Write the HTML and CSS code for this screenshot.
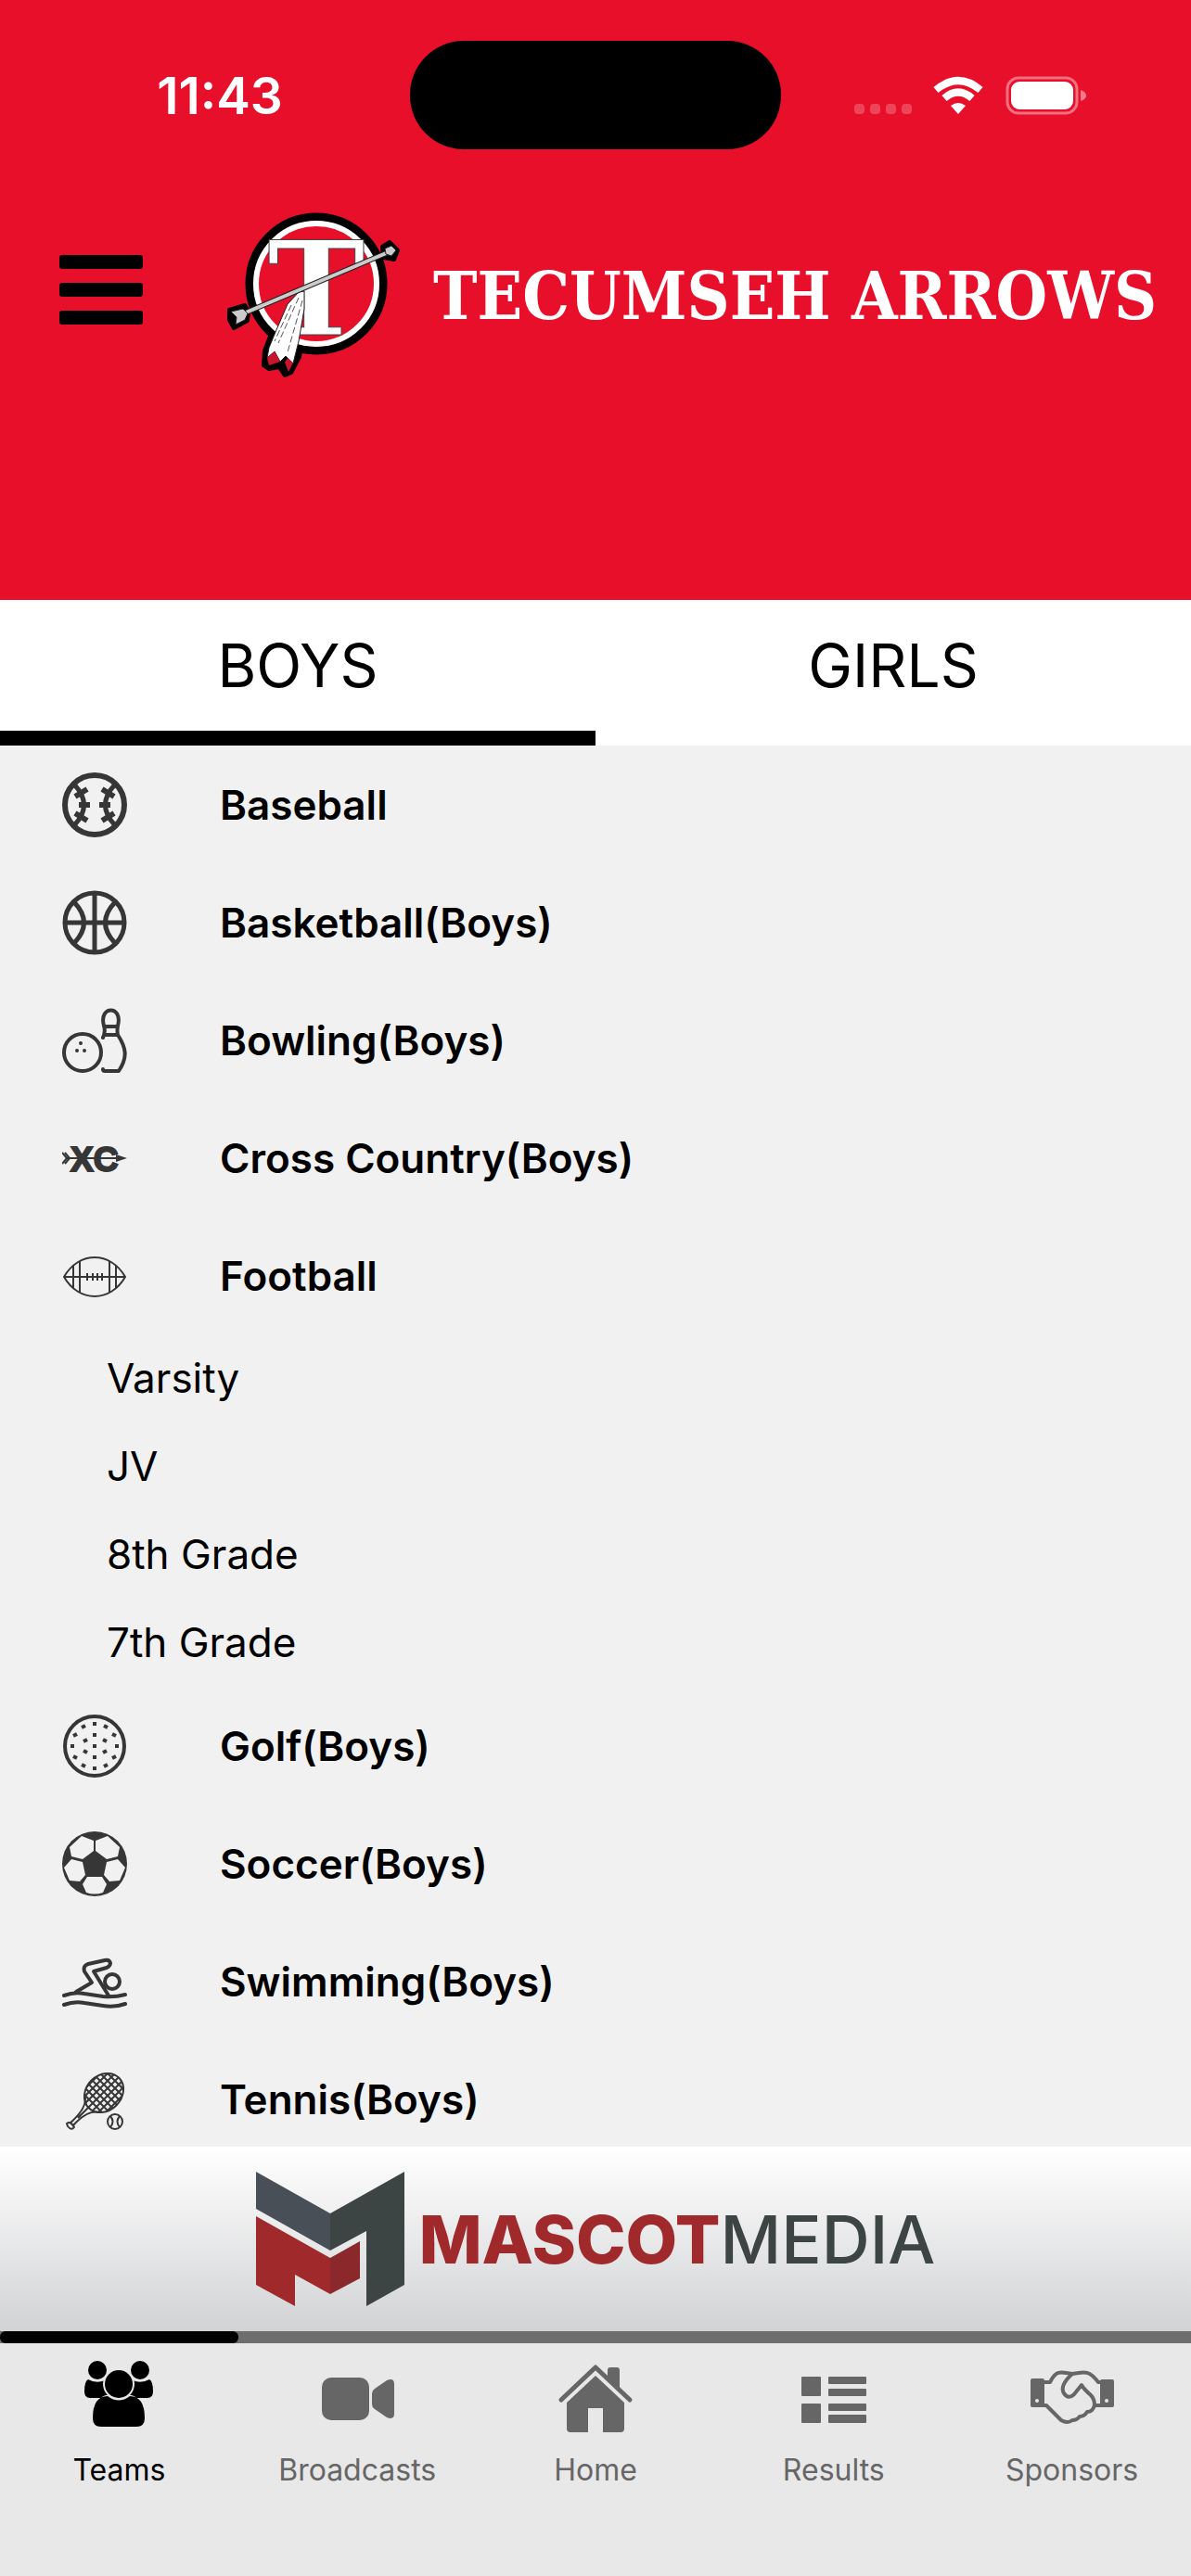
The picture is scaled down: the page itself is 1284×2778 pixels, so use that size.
FILE: index.html
```html
<!DOCTYPE html>
<html lang="en">
<head>
    <meta charset="UTF-8">
    <meta name="viewport" content="width=device-width">
    <title>Tecumseh Arrows</title>
    <link rel="stylesheet" href="styles.css">
</head>
<body>
<div class="app">
    <header class="header">
        <div class="status">
            <div class="status-side">11:43</div>
            <div class="island"></div>
            <div class="status-side">
                <svg width="250" height="42" viewBox="0 0 250 42" fill="#fff">
                    <g opacity=".22">
                        <rect x="0" y="30" width="11" height="11" rx="4"/>
                        <rect x="17" y="30" width="11" height="11" rx="4"/>
                        <rect x="34" y="30" width="11" height="11" rx="4"/>
                        <rect x="51" y="30" width="11" height="11" rx="4"/>
                    </g>
                    <g fill="none" stroke="#fff" stroke-width="8">
                        <path d="M88 15 Q112 -5 136 15"/>
                        <path d="M97 24 Q112 11 127 24"/>
                    </g>
                    <path d="M104 32 Q112 26 120 32 L112 41 Z"/>
                    <rect x="165" y="2" width="75" height="38" rx="12" fill="none" stroke="#fff" stroke-width="3" opacity=".4"/>
                    <rect x="169" y="6" width="67" height="30" rx="9"/>
                    <path d="M244 15 Q250 17 250 21 Q250 25 244 27 Z" opacity=".45"/>
                </svg>
            </div>
        </div>
        <div class="brand">
            <button class="menu" aria-label="Menu">
                <svg width="90" height="85" viewBox="0 0 90 85">
                    <rect width="90" height="15" rx="3"/>
                    <rect y="30" width="90" height="15" rx="3"/>
                    <rect y="60" width="90" height="15" rx="3"/>
                </svg>
            </button>
            <svg class="brand-logo" width="184" height="180" viewBox="15 19 184 180">
                <path d="M17 126 L34 121 38 128 37 138 22 146 17 137 Z M182 58 L190 53 199 62 195 72 183 70 Z M63 150 L55 170 54 186 60 190 71 188 77 197 84 194 93 177 98 150 Z" stroke="#000" stroke-width="4" stroke-linejoin="round"/>
                <circle cx="111" cy="98" r="72" fill="#e80f2b" stroke="#000" stroke-width="9"/>
                <circle cx="111" cy="98" r="65" fill="none" stroke="#fff" stroke-width="6"/>
                <text x="111" y="153" class="logo-letter">T</text>
                <path d="M92 107 L80 120 67 150 60 167 58 178 66 171 72 182 78 176 86 184 92 160 98 125 98 106 Z" fill="#fff" stroke="#222" stroke-width="1"/>
                <path d="M58 178 L66 171 72 182 60 186 Z M77 183 L80 178 86 183 81 193 Z" fill="#c9142b"/>
                <path d="M92 113 L70 162 M96 116 L80 172 M84 121 L66 160" stroke="#555" stroke-width="1" stroke-dasharray="7 3" fill="none"/>
                <path d="M28 132 L191 63" stroke="#222" stroke-width="6"/>
                <path d="M28 132 L191 63" stroke="#ccc" stroke-width="4"/>
                <path d="M19 128 L32 125 37 130 34 137 24 142 25 134 Z M185 60 L192 57 197 62 192 68 186 66 Z" fill="#ccc" stroke="#222" stroke-width="1"/>
            </svg>
            <h1 class="brand-name">TECUMSEH ARROWS</h1>
        </div>
    </header>

    <div class="tabs">
        <button class="tab active">BOYS</button>
        <button class="tab">GIRLS</button>
    </div>

    <main class="sports">
        <button class="sport">
            <svg class="sport-icon" viewBox="0 0 70 70">
                <circle cx="35" cy="35" r="32" stroke-width="6"/>
                <path d="M13 13 Q34 35 13 57 M57 13 Q36 35 57 57" stroke-width="5"/>
                <path d="M14 26 L27 18 M18 35 H30 M14 44 L27 52 M56 26 L43 18 M52 35 H40 M56 44 L43 52" stroke-width="6"/>
            </svg>
            Baseball
        </button>
        <button class="sport">
            <svg class="sport-icon" viewBox="0 0 70 70">
                <circle cx="35" cy="35" r="32" stroke-width="5"/>
                <path d="M13 13 Q34 35 13 57 M57 13 Q36 35 57 57 M35 3 V67 M3 35 H67" stroke-width="5"/>
            </svg>
            Basketball(Boys)
        </button>
        <button class="sport">
            <svg class="sport-icon" viewBox="0 0 70 70">
                <g stroke-width="4" stroke-linecap="round" stroke-linejoin="round">
                    <circle cx="22" cy="48" r="20"/>
                    <path d="M44 32 Q47 26 45 19 C39 -3 66 -3 60 19 Q59 25 60 29 C69 43 71 53 61 68 H46 Q44 68 44 66 M45 20 H60 M46 29 H60"/>
                </g>
                <g class="solid">
                    <circle cx="20" cy="38" r="2"/>
                    <circle cx="16" cy="46" r="2"/>
                    <circle cx="24" cy="46" r="2"/>
                </g>
            </svg>
            Bowling(Boys)
        </button>
        <button class="sport">
            <svg class="sport-icon" viewBox="0 0 70 70">
                <path d="M4 35 H60" stroke-width="2"/>
                <text x="9" y="49" class="xc">XC</text>
                <path d="M0 29 L5 35 0 41 M3 29 L8 35 3 41" stroke-width="2"/>
                <path class="solid" d="M58 31 L70 35 58 39 Z"/>
            </svg>
            Cross Country(Boys)
        </button>
        <button class="sport" aria-expanded="true">
            <svg class="sport-icon" viewBox="0 0 70 70">
                <path d="M2 36 C18 8 52 8 68 36 C52 64 18 64 2 36 Z M2 36 H68" stroke-width="2"/>
                <path d="M12 24 V48 M19 19 V53 M51 19 V53 M58 24 V48 M27 32 V40 M33 32 V40 M38 32 V40 M43 32 V40" stroke-width="2"/>
            </svg>
            Football
        </button>
        <ul class="levels">
            <li><a href="#varsity">Varsity</a></li>
            <li><a href="#jv">JV</a></li>
            <li><a href="#8th">8th Grade</a></li>
            <li><a href="#7th">7th Grade</a></li>
        </ul>
        <button class="sport">
            <svg class="sport-icon" viewBox="0 0 70 70">
                <circle cx="35" cy="35" r="32" stroke-width="4"/>
                <path d="M33 11h4M33 23h4M33 35h4M33 47h4M33 59h4M9 35h4M57 35h4M21 15l4-2M45 13l4 2M12 24l4-2M54 22l4 2M23 30l4-2M44 28l4 2M23 40l4 2M44 42l4-2M12 46l4 2M54 48l4-2M21 55l4 2M45 57l4-2" stroke-width="4"/>
            </svg>
            Golf(Boys)
        </button>
        <button class="sport">
            <svg class="sport-icon" viewBox="0 0 70 70">
                <circle class="solid" cx="35" cy="35" r="35"/>
                <g class="patch">
                    <path d="M21 5 L34 10 V21 L22 30 10 27 8 17 Z"/>
                    <path d="M49 5 L36 10 V21 L48 30 60 27 62 17 Z"/>
                    <path d="M10 30 L22 33 25 47 19 54 8 53 2 39 Z"/>
                    <path d="M60 30 L48 33 45 47 51 54 62 53 68 39 Z"/>
                    <path d="M27 49 H43 L48 57 44 66 Q35 69 26 66 L22 57 Z"/>
                </g>
            </svg>
            Soccer(Boys)
        </button>
        <button class="sport">
            <svg class="sport-icon" viewBox="0 0 70 70">
                <g stroke-width="4" stroke-linecap="round" stroke-linejoin="round">
                    <path d="M2 50 Q13 46 24 48 L44 51 Q57 52 68 49 M2 60 Q13 56 24 58 L44 61 Q57 63 68 59"/>
                    <path d="M15 46 L32 36 24 24 Q22 18 28 16 L46 12 Q51 11 52 15 Q52 18 48 20 L34 24 50 50"/>
                    <circle cx="54" cy="35" r="8"/>
                </g>
            </svg>
            Swimming(Boys)
        </button>
        <button class="sport">
            <svg class="sport-icon" viewBox="0 0 70 70">
                <defs>
                    <clipPath id="strings"><ellipse cx="45" cy="28" rx="23" ry="19" transform="rotate(-45 45 28)"/></clipPath>
                </defs>
                <ellipse cx="45" cy="28" rx="23" ry="19" transform="rotate(-45 45 28)" stroke-width="2"/>
                <path clip-path="url(#strings)" d="M10 38 L48 0 M10 46 L58 -2 M14 50 L66 -2 M22 50 L70 2 M30 50 L70 10 M38 50 L70 18 M46 50 L70 26 M20 26 L46 52 M20 18 L54 52 M20 10 L62 52 M24 6 L70 52 M32 6 L70 44 M40 6 L70 36 M48 6 L70 28" stroke-width="2"/>
                <path d="M25 33 Q26 46 8 61 M40 49 Q27 46 11 64 M29 43 L17 55 M5 61 Q9 58 13 65 Q10 69 6 64 Z" stroke-width="2"/>
                <circle cx="57" cy="59" r="8" stroke-width="2"/>
                <path d="M52 53 Q57 59 52 65 M62 53 Q57 59 62 65" stroke-width="2"/>
            </svg>
            Tennis(Boys)
        </button>
    </main>

    <a class="sponsor" href="#mascot-media">
        <svg width="160" height="145" viewBox="0 0 160 145">
            <path fill="#484f56" d="M0 0 L80 45 V85 L0 40 Z"/>
            <path fill="#3c4543" d="M80 45 L160 0 V122 L119 145 V64 L80 85 Z"/>
            <path fill="#a02a2b" d="M0 48 L80 93 V132 L42 111 V145 L0 122 Z"/>
            <path fill="#8a282b" d="M80 93 L112 75 V115 L80 132 Z"/>
        </svg>
        <span class="sponsor-name"><b>MASCOT</b>MEDIA</span>
    </a>

    <div class="progress"><div class="progress-value"></div></div>

    <nav class="nav">
        <a class="nav-item active" href="#teams">
            <svg class="nav-icon" viewBox="0 0 96 84">
                <circle cx="25" cy="16" r="10"/>
                <circle cx="71" cy="16" r="10"/>
                <path d="M15 26 Q24 31 33 27 L40 43 Q33 42 29 46 H17 Q11 46 11 39 Q11 28 15 26 Z M81 26 Q72 31 63 27 L56 43 Q63 42 67 46 H79 Q85 46 85 39 Q85 28 81 26 Z"/>
                <circle class="gap" cx="48" cy="31" r="17"/>
                <circle cx="48" cy="31" r="15"/>
                <path d="M36 44 Q48 53 60 44 Q76 44 76 68 Q76 77 67 77 H29 Q20 77 20 68 Q20 44 36 44 Z"/>
            </svg>
            Teams
        </a>
        <a class="nav-item" href="#broadcasts">
            <svg class="nav-icon" viewBox="0 0 96 84">
                <rect x="10" y="24" width="51" height="46" rx="10"/>
                <path d="M64 41 Q64 38 67 36 L80 27 Q88 24 88 31 V63 Q88 70 80 67 L67 58 Q64 56 64 53 Z"/>
            </svg>
            Broadcasts
        </a>
        <a class="nav-item" href="#home">
            <svg class="nav-icon" viewBox="0 0 96 84">
                <path d="M11 48 L48 13 85 48" fill="none" stroke="currentColor" stroke-width="5" stroke-linecap="round" stroke-linejoin="round"/>
                <path d="M61 24 V16 Q61 13 64 13 H71 Q74 13 74 16 V37 Z"/>
                <path d="M48 22 L79 51 V79 Q79 83 75 83 H56 V57 H40 V83 H21 Q17 83 17 79 V51 Z"/>
            </svg>
            Home
        </a>
        <a class="nav-item" href="#results">
            <svg class="nav-icon" viewBox="0 0 96 84">
                <rect x="13" y="23" width="21" height="21" rx="1"/>
                <rect x="13" y="52" width="21" height="21" rx="1"/>
                <rect x="42" y="23" width="41" height="8" rx="1"/>
                <rect x="42" y="36" width="41" height="8" rx="1"/>
                <rect x="42" y="52" width="41" height="8" rx="1"/>
                <rect x="42" y="64" width="41" height="9" rx="1"/>
            </svg>
            Results
        </a>
        <a class="nav-item" href="#sponsors">
            <svg class="nav-icon" viewBox="0 0 96 84">
                <rect x="3" y="25" width="15" height="31" rx="2"/>
                <rect x="78" y="26" width="15" height="30" rx="2"/>
                <circle class="gap" cx="10" cy="49" r="2"/>
                <circle class="gap" cx="85" cy="49" r="2"/>
                <path d="M17 29 H24 C30 17 34 17 48 20 C62 17 67 17 76 29 H80 M48 20 C38 29 36 36 39 41 Q44 48 50 42 L58 32 Q60 36 68 43 Q72 47 72 54 H80 M72 54 Q70 61 64 61 Q61 66 56 66 Q53 70 48 70 Q43 74 36 70 L20 54 H16" fill="none" stroke="currentColor" stroke-width="4" stroke-linejoin="round"/>
            </svg>
            Sponsors
        </a>
    </nav>
</div>
</body>
</html>
```
FILE: styles.css
```css
* {
    box-sizing: border-box;
}

body {
    margin: 0;
    font-family: Inter, "Liberation Sans", sans-serif;
    color: #000;
}

button {
    border: 0;
    padding: 0;
    background: none;
    font: inherit;
    color: inherit;
    cursor: pointer;
}

a {
    color: inherit;
    text-decoration: none;
}

svg {
    display: block;
    flex: none;
}

.app {
    display: flex;
    flex-direction: column;
    height: 100vh;
}

/* header */
.header {
    flex: none;
    padding: 44px 0 240px;
    background: #e80f2b;
    color: #fff;
}

.status {
    display: grid;
    grid-template-columns: 1fr 400px 1fr;
    align-items: center;
}

.status-side {
    display: flex;
    justify-content: center;
    font-size: 55px;
    font-weight: 600;
    line-height: 60px;
}

.status-side:first-child {
    padding-left: 32px;
}

.status-side:last-child {
    padding-right: 34px;
}

.island {
    height: 117px;
    border-radius: 58px;
    background: #000;
}

.brand {
    display: flex;
    align-items: center;
    margin-top: 66px;
    padding: 0 40px 0 64px;
}

.brand-logo {
    margin: 0 38px 0 91px;
    overflow: visible;
}

.logo-letter {
    font-family: "DejaVu Serif", serif;
    font-size: 141px;
    font-weight: bold;
    text-anchor: middle;
    fill: #fff;
    stroke: #444;
    stroke-width: 1px;
}

.brand-name {
    margin: 0;
    padding-top: 4px;
    font-family: "DejaVu Serif Condensed", "DejaVu Serif", serif;
    font-size: 71px;
    font-weight: bold;
    line-height: 80px;
    white-space: nowrap;
}

/* tabs */
.tabs {
    display: flex;
    flex: none;
    background: #fff;
}

.tab {
    flex: 1;
    height: 157px;
    border-bottom: 16px solid transparent;
    font-size: 64px;
}

.tab.active {
    border-color: #000;
}

/* sports list */
.sports {
    flex: 1;
    min-height: 0;
    overflow: hidden;
    background: #f1f1f1;
}

.sport {
    display: flex;
    align-items: center;
    gap: 100px;
    width: 100%;
    height: 127px;
    padding-left: 67px;
    font-size: 44px;
    font-weight: 600;
}

.sport-icon {
    width: 70px;
    height: 70px;
    fill: none;
    stroke: #363636;
}

.sport-icon .solid {
    fill: #363636;
    stroke: none;
}

.sport-icon .patch {
    fill: #f1f1f1;
    stroke: none;
}

.sport-icon .xc {
    font: bold 37px "Liberation Sans", sans-serif;
    fill: #363636;
    stroke-width: 2px;
}

.levels {
    margin: 0;
    padding: 0;
    list-style: none;
    font-size: 44px;
}

.levels a {
    display: block;
    padding-left: 115px;
    line-height: 95px;
}

/* sponsor banner */
.sponsor {
    display: flex;
    flex: none;
    align-items: center;
    justify-content: center;
    gap: 16px;
    height: 199px;
    background: linear-gradient(#fff, #d2d3d5);
}

.sponsor-name {
    font-size: 72px;
    font-weight: 500;
    color: #3c4543;
}

.sponsor-name b {
    font-weight: 800;
    color: #a02a2b;
}

.progress {
    flex: none;
    height: 13px;
    background: #6e6e6e;
}

.progress-value {
    width: 20%;
    height: 100%;
    border-radius: 6px;
    background: #000;
}

/* bottom navigation */
.nav {
    display: flex;
    flex: none;
    height: 251px;
    padding-top: 13px;
    background: #e8e8e8;
}

.nav-item {
    display: flex;
    flex: 1;
    flex-direction: column;
    align-items: center;
    gap: 20px;
    font-size: 32px;
    line-height: 40px;
    color: #666;
}

.nav-item.active {
    color: #000;
}

.nav-icon {
    width: 96px;
    height: 84px;
    fill: currentColor;
}

.nav-icon .gap {
    fill: #e8e8e8;
}
```
